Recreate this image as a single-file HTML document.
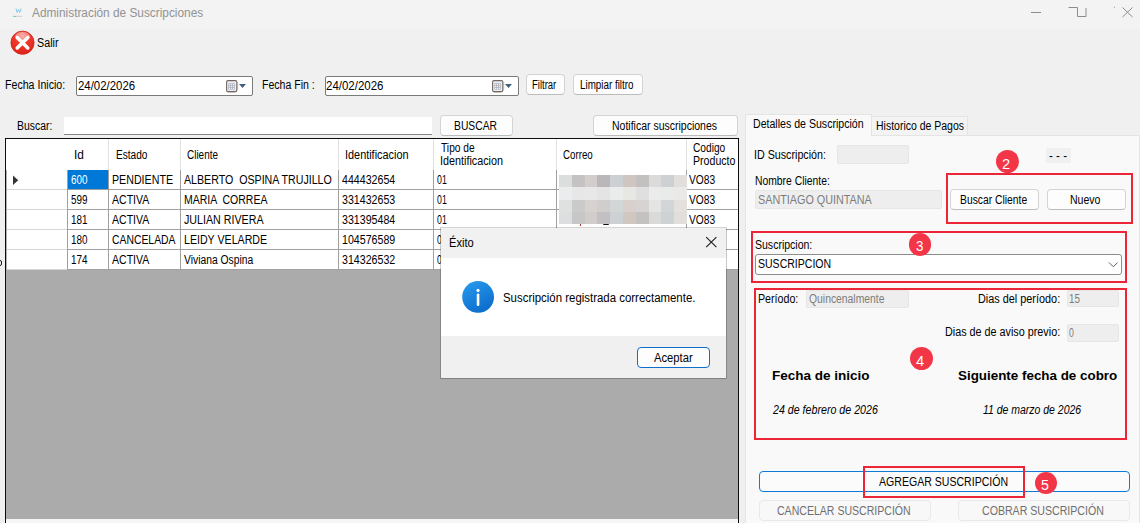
<!DOCTYPE html>
<html lang="es">
<head>
<meta charset="utf-8">
<title>Administración de Suscripciones</title>
<style>
*{box-sizing:border-box;margin:0;padding:0}
html,body{width:1140px;height:523px;overflow:hidden;background:#f0f0f0}
body{position:relative;font-family:"Liberation Sans",sans-serif;font-size:12px;color:#000}
.a{position:absolute;display:block}
.t{position:absolute;display:block;white-space:pre;line-height:16px;height:16px;transform-origin:0 0}
.btn{position:absolute;background:#fdfdfd;border:1px solid #d4d4d4;border-bottom-color:#bcbcbc;border-radius:4px}
.tb{position:absolute;background:#fff;border:1px solid #7a7a7a;border-radius:2px}
.dis{position:absolute;background:#eeeeee;border:1px solid #e6e6e6;border-radius:2px}
.rb{position:absolute;border:2px solid #ec2638}
.rc{position:absolute;border-radius:50%;background:#f33647}
.vl{position:absolute;width:1px;background:#a0a0a0}
.hl{position:absolute;height:1px;background:#a0a0a0}
</style>
</head>
<body>
<!-- window chrome -->
<div class="a" style="left:0;top:0;width:1140px;height:29px;background:#f3f3f3"></div>
<svg class="a" style="left:12px;top:5px" width="14" height="14" viewBox="0 0 14 14"><path d="M4 3.5 L5.2 7.5 L6.5 4.5 L7.8 7.5 L9 3.5" fill="none" stroke="#7fc3e6" stroke-width="0.9"/><path d="M0.5 11.3 H10" stroke="#c4c8ca" stroke-width="0.9"/><path d="M1.5 11 H4 L2.8 12.3 Z" fill="#58c4c4"/></svg>
<svg class="a" style="left:1028px;top:4px" width="110" height="18" viewBox="0 0 110 18"><g fill="none" stroke="#8c8c8c" stroke-width="1"><path d="M3 8.5 H13"/><path d="M40.5 3.5 H49.5 V12.5 H58 V4"/><path d="M94.5 3.5 L104.5 13 M104.5 3.5 L94.5 13"/></g><circle cx="86.4" cy="3.2" r="0.6" fill="#9a9a9a"/></svg>

<!-- toolbar: Salir -->
<svg class="a" style="left:10px;top:30px" width="26" height="26" viewBox="0 0 26 26"><defs><radialGradient id="sg" cx="0.5" cy="0.2" r="0.75"><stop offset="0" stop-color="#f7938c"/><stop offset="0.45" stop-color="#ef3a2c"/><stop offset="1" stop-color="#e2241a"/></radialGradient></defs><circle cx="12.5" cy="12.7" r="11.6" fill="url(#sg)" stroke="#c9221a" stroke-width="0.8"/><ellipse cx="12.5" cy="6.6" rx="7.6" ry="4.6" fill="#fff" opacity="0.28"/><path d="M7.2 7.4 L17.8 18 M17.8 7.4 L7.2 18" stroke="#fff" stroke-width="3.5" stroke-linecap="round"/></svg>

<!-- filter row -->
<div class="tb" style="left:76px;top:76px;width:177px;height:20px"></div>
<svg class="a" style="left:225px;top:79px" width="24" height="14" viewBox="0 0 24 14"><path d="M3 13.2 H9.5 L12.8 10.5 V3" fill="none" stroke="#c9c9c9" stroke-width="0.9"/><rect x="1.6" y="1.6" width="10.2" height="11" rx="1.3" fill="#e9eef8" stroke="#75675f" stroke-width="1.1"/><rect x="3.3" y="4.3" width="6.5" height="6.2" fill="#a9acb6"/><rect x="3.9" y="4.9" width="1.3" height="1.2" fill="#f2f4fa"/><rect x="5.9" y="4.9" width="1.3" height="1.2" fill="#f2f4fa"/><rect x="7.9" y="4.9" width="1.3" height="1.2" fill="#f2f4fa"/><rect x="3.9" y="6.8" width="1.3" height="1.2" fill="#f2f4fa"/><rect x="5.9" y="6.8" width="1.3" height="1.2" fill="#f2f4fa"/><rect x="7.9" y="6.8" width="1.3" height="1.2" fill="#f2f4fa"/><rect x="3.9" y="8.7" width="1.3" height="1.2" fill="#f2f4fa"/><rect x="5.9" y="8.7" width="1.3" height="1.2" fill="#f2f4fa"/><rect x="7.9" y="8.7" width="1.3" height="1.2" fill="#f2f4fa"/><path d="M14 5 H21 L17.5 9 Z" fill="#41607f"/></svg>
<div class="tb" style="left:325px;top:76px;width:194px;height:20px"></div>
<svg class="a" style="left:491px;top:79px" width="24" height="14" viewBox="0 0 24 14"><path d="M3 13.2 H9.5 L12.8 10.5 V3" fill="none" stroke="#c9c9c9" stroke-width="0.9"/><rect x="1.6" y="1.6" width="10.2" height="11" rx="1.3" fill="#e9eef8" stroke="#75675f" stroke-width="1.1"/><rect x="3.3" y="4.3" width="6.5" height="6.2" fill="#a9acb6"/><rect x="3.9" y="4.9" width="1.3" height="1.2" fill="#f2f4fa"/><rect x="5.9" y="4.9" width="1.3" height="1.2" fill="#f2f4fa"/><rect x="7.9" y="4.9" width="1.3" height="1.2" fill="#f2f4fa"/><rect x="3.9" y="6.8" width="1.3" height="1.2" fill="#f2f4fa"/><rect x="5.9" y="6.8" width="1.3" height="1.2" fill="#f2f4fa"/><rect x="7.9" y="6.8" width="1.3" height="1.2" fill="#f2f4fa"/><rect x="3.9" y="8.7" width="1.3" height="1.2" fill="#f2f4fa"/><rect x="5.9" y="8.7" width="1.3" height="1.2" fill="#f2f4fa"/><rect x="7.9" y="8.7" width="1.3" height="1.2" fill="#f2f4fa"/><path d="M14 5 H21 L17.5 9 Z" fill="#41607f"/></svg>
<div class="btn" style="left:526px;top:74px;width:39px;height:21px"></div>
<div class="btn" style="left:573px;top:74px;width:70px;height:21px"></div>

<!-- search row -->
<div class="a" style="left:64px;top:117px;width:368px;height:18px;background:#fff;border-bottom:1px solid #868686"></div>
<div class="btn" style="left:440px;top:115px;width:73px;height:21px"></div>
<div class="btn" style="left:593px;top:115px;width:145px;height:21px"></div>

<!-- data grid -->
<div class="a" style="left:5px;top:138px;width:734px;height:390px;background:#ababab;border:1px solid #0c0c0c"></div>
<div class="a" style="left:6px;top:518.5px;width:732px;height:6px;background:#f6f6f6"></div>
<div class="a" style="left:6px;top:139px;width:732px;height:131px;background:#fff"></div>
<div class="vl" style="left:108px;top:139px;height:31px;background:#e2e2e2"></div>
<div class="vl" style="left:180px;top:139px;height:31px;background:#e2e2e2"></div>
<div class="vl" style="left:338px;top:139px;height:31px;background:#e2e2e2"></div>
<div class="vl" style="left:433px;top:139px;height:31px;background:#e2e2e2"></div>
<div class="vl" style="left:556px;top:139px;height:31px;background:#e2e2e2"></div>
<div class="vl" style="left:686px;top:139px;height:31px;background:#e2e2e2"></div>
<div class="vl" style="left:6px;top:170px;height:100px;background:#b0b0b0"></div>
<div class="vl" style="left:67px;top:170px;height:100px"></div>
<div class="vl" style="left:108px;top:170px;height:100px"></div>
<div class="vl" style="left:180px;top:170px;height:100px"></div>
<div class="vl" style="left:338px;top:170px;height:100px"></div>
<div class="vl" style="left:433px;top:170px;height:100px"></div>
<div class="vl" style="left:556px;top:170px;height:100px"></div>
<div class="vl" style="left:686px;top:170px;height:100px"></div>
<div class="hl" style="left:68px;top:189px;width:670px"></div>
<div class="hl" style="left:68px;top:209px;width:670px"></div>
<div class="hl" style="left:68px;top:229px;width:670px"></div>
<div class="hl" style="left:68px;top:249px;width:670px"></div>
<div class="hl" style="left:68px;top:269px;width:670px"></div>
<div class="hl" style="left:7px;top:189px;width:60px;background:#d6d6d6"></div>
<div class="hl" style="left:7px;top:209px;width:60px;background:#d6d6d6"></div>
<div class="hl" style="left:7px;top:229px;width:60px;background:#d6d6d6"></div>
<div class="hl" style="left:7px;top:249px;width:60px;background:#d6d6d6"></div>
<div class="hl" style="left:7px;top:269px;width:60px;background:#d6d6d6"></div>
<div class="a" style="left:68px;top:170px;width:40px;height:19px;background:#0078d7"></div>
<svg class="a" style="left:12px;top:175px" width="7" height="11" viewBox="0 0 7 11"><path d="M1 0.5 L6.2 5.2 L1 10 Z" fill="#333"/></svg>
<!-- blurred mail block -->
<svg class="a" style="left:559px;top:175px" width="128" height="49" viewBox="0 0 10 4" preserveAspectRatio="none" shape-rendering="crispEdges">
<rect x="0" y="0" width="1.02" height="1.02" fill="#dcdddd"/><rect x="1" y="0" width="1.02" height="1.02" fill="#c4c2c2"/><rect x="2" y="0" width="1.02" height="1.02" fill="#d3cecc"/><rect x="3" y="0" width="1.02" height="1.02" fill="#b9b7b9"/><rect x="4" y="0" width="1.02" height="1.02" fill="#cdd0d2"/><rect x="5" y="0" width="1.02" height="1.02" fill="#cfc6c1"/><rect x="6" y="0" width="1.02" height="1.02" fill="#c3c1c0"/><rect x="7" y="0" width="1.02" height="1.02" fill="#dbdbdb"/><rect x="8" y="0" width="1.02" height="1.02" fill="#cdd1d3"/><rect x="9" y="0" width="1.02" height="1.02" fill="#e1dedc"/><rect x="0" y="1" width="1.02" height="1.02" fill="#eaecee"/><rect x="1" y="1" width="1.02" height="1.02" fill="#e7e7e7"/><rect x="2" y="1" width="1.02" height="1.02" fill="#e8e8e8"/><rect x="3" y="1" width="1.02" height="1.02" fill="#e4e4e4"/><rect x="4" y="1" width="1.02" height="1.02" fill="#e9eceb"/><rect x="5" y="1" width="1.02" height="1.02" fill="#e7e7e4"/><rect x="6" y="1" width="1.02" height="1.02" fill="#dfdfdf"/><rect x="7" y="1" width="1.02" height="1.02" fill="#ebebeb"/><rect x="8" y="1" width="1.02" height="1.02" fill="#e9eaea"/><rect x="9" y="1" width="1.02" height="1.02" fill="#ebe9e8"/><rect x="0" y="2" width="1.02" height="1.02" fill="#dfe1e1"/><rect x="1" y="2" width="1.02" height="1.02" fill="#cbcaca"/><rect x="2" y="2" width="1.02" height="1.02" fill="#d7d1cf"/><rect x="3" y="2" width="1.02" height="1.02" fill="#d0cdcd"/><rect x="4" y="2" width="1.02" height="1.02" fill="#d3d6d7"/><rect x="5" y="2" width="1.02" height="1.02" fill="#d8d0cc"/><rect x="6" y="2" width="1.02" height="1.02" fill="#d6d3d2"/><rect x="7" y="2" width="1.02" height="1.02" fill="#e4e4e4"/><rect x="8" y="2" width="1.02" height="1.02" fill="#d3d6d8"/><rect x="9" y="2" width="1.02" height="1.02" fill="#e3e0de"/><rect x="0" y="3" width="1.02" height="1.02" fill="#dcdee0"/><rect x="1" y="3" width="1.02" height="1.02" fill="#c8c7c8"/><rect x="2" y="3" width="1.02" height="1.02" fill="#d2ccca"/><rect x="3" y="3" width="1.02" height="1.02" fill="#c2c0c3"/><rect x="4" y="3" width="1.02" height="1.02" fill="#cdd1d3"/><rect x="5" y="3" width="1.02" height="1.02" fill="#d1c7c1"/><rect x="6" y="3" width="1.02" height="1.02" fill="#c4c2c1"/><rect x="7" y="3" width="1.02" height="1.02" fill="#dadada"/><rect x="8" y="3" width="1.02" height="1.02" fill="#cdd2d5"/><rect x="9" y="3" width="1.02" height="1.02" fill="#e1dedc"/>
</svg>

<div class="a" style="left:-4px;top:259.5px;width:6px;height:6.5px;border:1.6px solid #1a1a1a;border-radius:2px"></div>
<div class="a" style="left:602.5px;top:223.7px;width:6px;height:1.6px;background:#111;border-radius:0 0 3px 3px"></div>
<div class="a" style="left:579.7px;top:223.7px;width:1px;height:2px;background:#a33"></div>
<!-- right panel: tabs -->
<div class="a" style="left:871px;top:116px;width:97px;height:20px;background:#f3f3f3;border:1px solid #e4e4e4;border-bottom:none;border-left:none"></div>
<div class="a" style="left:745px;top:135px;width:395px;height:392px;background:#f9f9f9;border:1px solid #e4e4e4"></div>
<div class="a" style="left:745px;top:114px;width:127px;height:22px;background:#f9f9f9;border:1px solid #e4e4e4;border-bottom:none"></div>

<div class="dis" style="left:837px;top:145px;width:72px;height:19px"></div>
<div class="a" style="left:1046px;top:148px;width:25px;height:15px;background:#f0f0f0"></div>
<div class="dis" style="left:755px;top:190px;width:187px;height:19px"></div>
<div class="btn" style="left:950px;top:189px;width:89px;height:21px"></div>
<div class="btn" style="left:1047px;top:189px;width:79px;height:21px"></div>
<div class="rb" style="left:946px;top:173px;width:187px;height:51px"></div>
<div class="rc" style="left:995.7px;top:150.4px;width:22.9px;height:22.9px"></div>

<div class="tb" style="left:755px;top:254px;width:367px;height:21px;border-color:#8d8d8d;border-radius:3px"></div>
<svg class="a" style="left:1108px;top:261px" width="11" height="8" viewBox="0 0 11 8"><path d="M1 1.5 L5.3 5.8 L9.6 1.5" fill="none" stroke="#606060" stroke-width="1"/></svg>
<div class="rb" style="left:751px;top:231px;width:376px;height:52px"></div>
<div class="rc" style="left:908.7px;top:232.9px;width:22.8px;height:22.8px"></div>

<div class="dis" style="left:806px;top:290px;width:103px;height:18px"></div>
<div class="dis" style="left:1067px;top:290px;width:52px;height:17px"></div>
<div class="dis" style="left:1067px;top:324px;width:52px;height:18px"></div>
<div class="rb" style="left:754px;top:288px;width:373px;height:152px"></div>
<div class="rc" style="left:909.6px;top:347.3px;width:23px;height:23px"></div>

<div class="btn" style="left:759px;top:471px;width:371px;height:21px;border-color:#0f7bd7;background:#fbfbfb"></div>
<div class="rb" style="left:863px;top:466px;width:162px;height:32px"></div>
<div class="rc" style="left:1034.6px;top:471.5px;width:22.9px;height:22.9px"></div>
<div class="btn" style="left:759px;top:500px;width:172px;height:21px;background:#f8f8f8;border-color:#e9e9e9"></div>
<div class="btn" style="left:958px;top:500px;width:172px;height:21px;background:#f8f8f8;border-color:#e9e9e9"></div>

<!-- text -->
<span class="t" style="left:31.60px;top:5.14px;transform:scaleX(0.9872);color:#929292">Administración de Suscripciones</span>
<span class="t" style="left:37.10px;top:35.04px;transform:scaleX(0.8955)">Salir</span>
<span class="t" style="left:5.30px;top:77.24px;transform:scaleX(0.8848)">Fecha Inicio:</span>
<span class="t" style="left:77.90px;top:78.24px;transform:scaleX(0.9506)">24/02/2026</span>
<span class="t" style="left:261.60px;top:77.24px;transform:scaleX(0.8796)">Fecha Fin :</span>
<span class="t" style="left:326.35px;top:78.24px;transform:scaleX(0.9564)">24/02/2026</span>
<span class="t" style="left:532.10px;top:77.39px;transform:scaleX(0.7908)">Filtrar</span>
<span class="t" style="left:580.10px;top:77.39px;transform:scaleX(0.8184)">Limpiar filtro</span>
<span class="t" style="left:17.10px;top:118.14px;transform:scaleX(0.8675)">Buscar:</span>
<span class="t" style="left:453.85px;top:118.14px;transform:scaleX(0.8591)">BUSCAR</span>
<span class="t" style="left:612.10px;top:118.14px;transform:scaleX(0.8747)">Notificar suscripciones</span>
<span class="t" style="left:73.61px;top:146.89px;transform:scaleX(0.9899)">Id</span>
<span class="t" style="left:115.85px;top:146.89px;transform:scaleX(0.8425)">Estado</span>
<span class="t" style="left:187.10px;top:146.89px;transform:scaleX(0.8294)">Cliente</span>
<span class="t" style="left:344.94px;top:146.89px;transform:scaleX(0.9068)">Identificacion</span>
<span class="t" style="left:441.35px;top:139.89px;transform:scaleX(0.8520)">Tipo de</span>
<span class="t" style="left:440.45px;top:152.89px;transform:scaleX(0.8995)">Identificacion</span>
<span class="t" style="left:563.35px;top:146.89px;transform:scaleX(0.8107)">Correo</span>
<span class="t" style="left:693.20px;top:140.14px;transform:scaleX(0.8474)">Codigo</span>
<span class="t" style="left:693.20px;top:153.14px;transform:scaleX(0.8830)">Producto</span>
<span class="t" style="left:71.10px;top:171.89px;transform:scaleX(0.8232);color:#fff">600</span>
<span class="t" style="left:111.60px;top:171.89px;transform:scaleX(0.8883)">PENDIENTE</span>
<span class="t" style="left:183.85px;top:171.89px;transform:scaleX(0.8863)">ALBERTO  OSPINA TRUJILLO</span>
<span class="t" style="left:341.60px;top:171.89px;transform:scaleX(0.8859)">444432654</span>
<span class="t" style="left:437.10px;top:171.89px;transform:scaleX(0.7313)">01</span>
<span class="t" style="left:689.40px;top:171.89px;transform:scaleX(0.8513)">VO83</span>
<span class="t" style="left:71.10px;top:191.89px;transform:scaleX(0.8232)">599</span>
<span class="t" style="left:111.60px;top:191.89px;transform:scaleX(0.8776)">ACTIVA</span>
<span class="t" style="left:183.85px;top:191.89px;transform:scaleX(0.8749)">MARIA  CORREA</span>
<span class="t" style="left:341.60px;top:191.89px;transform:scaleX(0.8859)">331432653</span>
<span class="t" style="left:437.10px;top:191.89px;transform:scaleX(0.7313)">01</span>
<span class="t" style="left:689.40px;top:191.89px;transform:scaleX(0.8513)">VO83</span>
<span class="t" style="left:71.10px;top:211.89px;transform:scaleX(0.8232)">181</span>
<span class="t" style="left:111.60px;top:211.89px;transform:scaleX(0.8776)">ACTIVA</span>
<span class="t" style="left:183.85px;top:211.89px;transform:scaleX(0.8897)">JULIAN RIVERA</span>
<span class="t" style="left:341.60px;top:211.89px;transform:scaleX(0.8859)">331395484</span>
<span class="t" style="left:437.10px;top:211.89px;transform:scaleX(0.7313)">01</span>
<span class="t" style="left:689.40px;top:211.89px;transform:scaleX(0.8513)">VO83</span>
<span class="t" style="left:71.10px;top:231.89px;transform:scaleX(0.8232)">180</span>
<span class="t" style="left:111.60px;top:231.89px;transform:scaleX(0.8657)">CANCELADA</span>
<span class="t" style="left:183.85px;top:231.89px;transform:scaleX(0.8853)">LEIDY VELARDE</span>
<span class="t" style="left:341.60px;top:231.89px;transform:scaleX(0.8859)">104576589</span>
<span class="t" style="left:437.10px;top:231.89px;transform:scaleX(0.7286)">0</span>
<span class="t" style="left:71.10px;top:251.89px;transform:scaleX(0.8232)">174</span>
<span class="t" style="left:111.60px;top:251.89px;transform:scaleX(0.8776)">ACTIVA</span>
<span class="t" style="left:183.85px;top:251.89px;transform:scaleX(0.8599)">Viviana Ospina</span>
<span class="t" style="left:341.60px;top:251.89px;transform:scaleX(0.8859)">314326532</span>
<span class="t" style="left:437.10px;top:251.89px;transform:scaleX(0.7286)">0</span>
<span class="t" style="left:752.60px;top:115.64px;transform:scaleX(0.8820)">Detalles de Suscripción</span>
<span class="t" style="left:875.85px;top:118.14px;transform:scaleX(0.8737)">Historico de Pagos</span>
<span class="t" style="left:754.21px;top:147.39px;transform:scaleX(0.8915)">ID Suscripción:</span>
<span class="t" style="left:1049.10px;top:148.14px;transform:scaleX(0.9646)">- - -</span>
<span class="t" style="left:755.10px;top:172.64px;transform:scaleX(0.8626)">Nombre Cliente:</span>
<span class="t" style="left:757.60px;top:191.89px;transform:scaleX(0.8995);color:#7c7c7c">SANTIAGO QUINTANA</span>
<span class="t" style="left:959.60px;top:191.89px;transform:scaleX(0.8614)">Buscar Cliente</span>
<span class="t" style="left:1070.10px;top:191.89px;transform:scaleX(0.8782)">Nuevo</span>
<span class="t" style="left:755.10px;top:236.89px;transform:scaleX(0.8766)">Suscripcion:</span>
<span class="t" style="left:757.60px;top:256.14px;transform:scaleX(0.8769)">SUSCRIPCION</span>
<span class="t" style="left:758.35px;top:290.64px;transform:scaleX(0.8883)">Período:</span>
<span class="t" style="left:808.85px;top:290.64px;transform:scaleX(0.8636);color:#7c7c7c">Quincenalmente</span>
<span class="t" style="left:978.35px;top:290.64px;transform:scaleX(0.9056)">Dias del período:</span>
<span class="t" style="left:1069.40px;top:290.54px;transform:scaleX(0.8191);color:#7c7c7c">15</span>
<span class="t" style="left:945.35px;top:324.39px;transform:scaleX(0.8991)">Dias de de aviso previo:</span>
<span class="t" style="left:1069.40px;top:324.64px;transform:scaleX(0.7286);color:#7c7c7c">0</span>
<span class="t" style="left:771.90px;top:368.27px;transform:scaleX(1.0809);font-size:12.5px;font-weight:bold">Fecha de inicio</span>
<span class="t" style="left:958.30px;top:368.27px;transform:scaleX(1.0711);font-size:12.5px;font-weight:bold">Siguiente fecha de cobro</span>
<span class="t" style="left:772.79px;top:401.64px;transform:scaleX(0.8876);font-style:italic">24 de febrero de 2026</span>
<span class="t" style="left:982.90px;top:401.64px;transform:scaleX(0.8720);font-style:italic">11 de marzo de 2026</span>
<span class="t" style="left:878.70px;top:474.44px;transform:scaleX(0.8800)">AGREGAR SUSCRIPCIÓN</span>
<span class="t" style="left:777.00px;top:502.84px;transform:scaleX(0.8794);color:#6f6f6f">CANCELAR SUSCRIPCIÓN</span>
<span class="t" style="left:982.00px;top:502.84px;transform:scaleX(0.8824);color:#6f6f6f">COBRAR SUSCRIPCIÓN</span>
<span class="t" style="left:1002.10px;top:156.03px;transform:scaleX(0.9500);font-size:15.5px;color:#fff">2</span>
<span class="t" style="left:915.50px;top:238.03px;transform:scaleX(0.8625);font-size:15.5px;color:#fff">3</span>
<span class="t" style="left:915.50px;top:353.03px;transform:scaleX(0.9500);font-size:15.5px;color:#fff">4</span>
<span class="t" style="left:1041.35px;top:477.03px;transform:scaleX(0.9187);font-size:15.5px;color:#fff">5</span>
<!-- message box -->
<div class="a" style="left:441.3px;top:228.3px;width:284.4px;height:149.4px;background:#fff;box-shadow:0 0 0 1px rgba(0,0,0,.17),0 0.5px 1.5px rgba(0,0,0,.22)"></div>
<div class="a" style="left:441.3px;top:228.3px;width:284.4px;height:29.3px;background:#f1f1f1"></div>
<div class="a" style="left:441.3px;top:335.8px;width:284.4px;height:41.9px;background:#f0f0f0"></div>
<svg class="a" style="left:705px;top:236px" width="13" height="13" viewBox="0 0 13 13"><path d="M1.2 1.2 L11.4 11.2 M11.4 1.2 L1.2 11.2" stroke="#1c1c1c" stroke-width="1.1" fill="none"/></svg>
<svg class="a" style="left:461px;top:280px" width="34" height="34" viewBox="0 0 34 34"><defs><linearGradient id="ig" x1="0.2" y1="0" x2="0.7" y2="1"><stop offset="0" stop-color="#2699ec"/><stop offset="1" stop-color="#0c6bcb"/></linearGradient></defs><circle cx="17.1" cy="16.9" r="15.9" fill="url(#ig)"/><rect x="15.75" y="13.5" width="2.6" height="12.4" rx="1.2" fill="#fff"/><circle cx="17.05" cy="10.4" r="1.55" fill="#fff"/></svg>
<div class="btn" style="left:637px;top:347px;width:73px;height:21px;border-color:#0b6fcb;background:#fdfdfd"></div>

<span class="t" style="left:449.10px;top:235.34px;transform:scaleX(0.9258)">Éxito</span>
<span class="t" style="left:503.00px;top:290.14px;transform:scaleX(0.9521)">Suscripción registrada correctamente.</span>
<span class="t" style="left:653.80px;top:350.14px;transform:scaleX(0.9357)">Aceptar</span>
</body>
</html>
